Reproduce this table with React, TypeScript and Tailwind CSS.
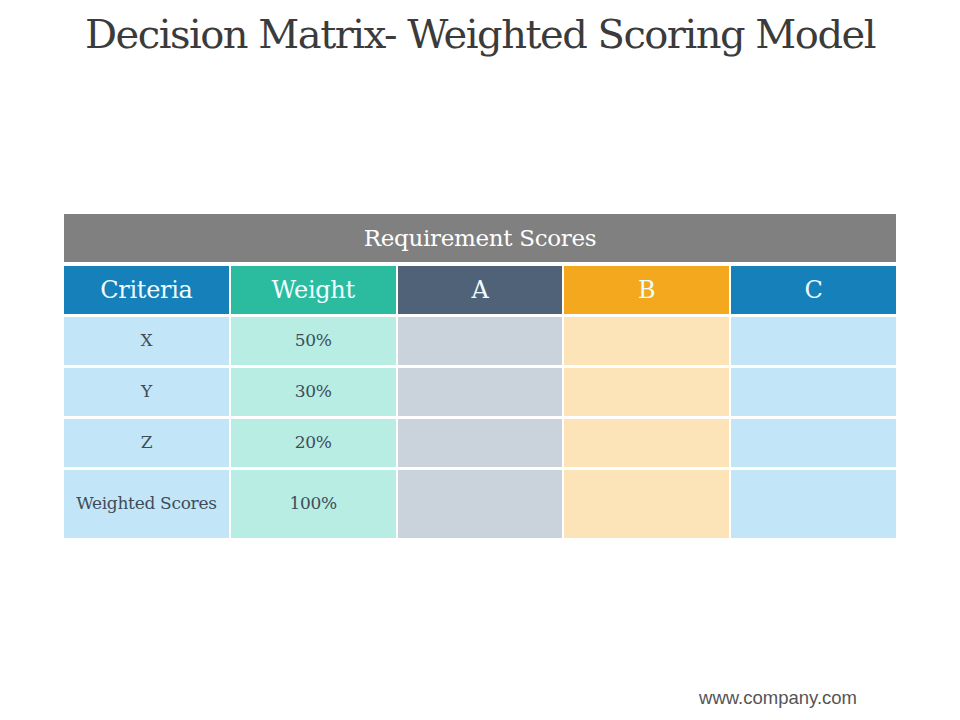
const serif = { fontFamily: '"DejaVu Serif", "Liberation Serif", serif' };

const heads = [
  { label: 'Criteria', bg: 'bg-[#1580b9]' },
  { label: 'Weight', bg: 'bg-[#2bbc9f]' },
  { label: 'A', bg: 'bg-[#4f6277]' },
  { label: 'B', bg: 'bg-[#f4a81d]' },
  { label: 'C', bg: 'bg-[#1580b9]' },
];

const cellBg = ['bg-[#c2e6f8]', 'bg-[#b7ede2]', 'bg-[#cad2db]', 'bg-[#fce4b8]', 'bg-[#c2e6f8]'];

const rows = [
  { name: 'X', weight: '50%', h: 'h-[48px]' },
  { name: 'Y', weight: '30%', h: 'h-[48px]' },
  { name: 'Z', weight: '20%', h: 'h-[48px]' },
  { name: 'Weighted Scores', weight: '100%', h: 'h-[68px]' },
];

export default function App() {
  return (
    <div className="w-[960px] h-[720px] bg-white flex flex-col relative overflow-hidden">
      <h1
        className="text-center text-[40px] leading-none text-[#3b3b3b] pt-[14px] tracking-[-1.5px]"
        style={serif}
      >
        Decision Matrix- Weighted Scoring Model
      </h1>

      <div className="mx-[64px] mt-[160px] flex flex-col gap-[3px]" style={serif}>
        <div className="h-[48px] mb-[1px] bg-[#808080] flex items-center justify-center text-white text-[23px] tracking-[-0.3px]">
          Requirement Scores
        </div>
        <div className="grid grid-cols-5 gap-[2px]">
          {heads.map((c) => (
            <div
              key={c.label}
              className={`${c.bg} h-[48px] flex items-center justify-center text-[#effcff] text-[24px] tracking-[-0.3px]`}
            >
              {c.label}
            </div>
          ))}
        </div>
        {rows.map((r) => (
          <div key={r.name} className="grid grid-cols-5 gap-[2px]">
            {cellBg.map((bg, i) => (
              <div
                key={i}
                className={`${bg} ${r.h} flex items-center justify-center text-[#3e4c5a] text-[17px] tracking-[-0.3px]`}
              >
                {i === 0 ? r.name : i === 1 ? r.weight : ''}
              </div>
            ))}
          </div>
        ))}
      </div>

      <div
        className="absolute right-[103px] top-[684px] text-[18.5px] text-[#555555]"
        style={{ fontFamily: '"Liberation Sans", Arial, sans-serif' }}
      >
        www.company.com
      </div>
    </div>
  );
}
